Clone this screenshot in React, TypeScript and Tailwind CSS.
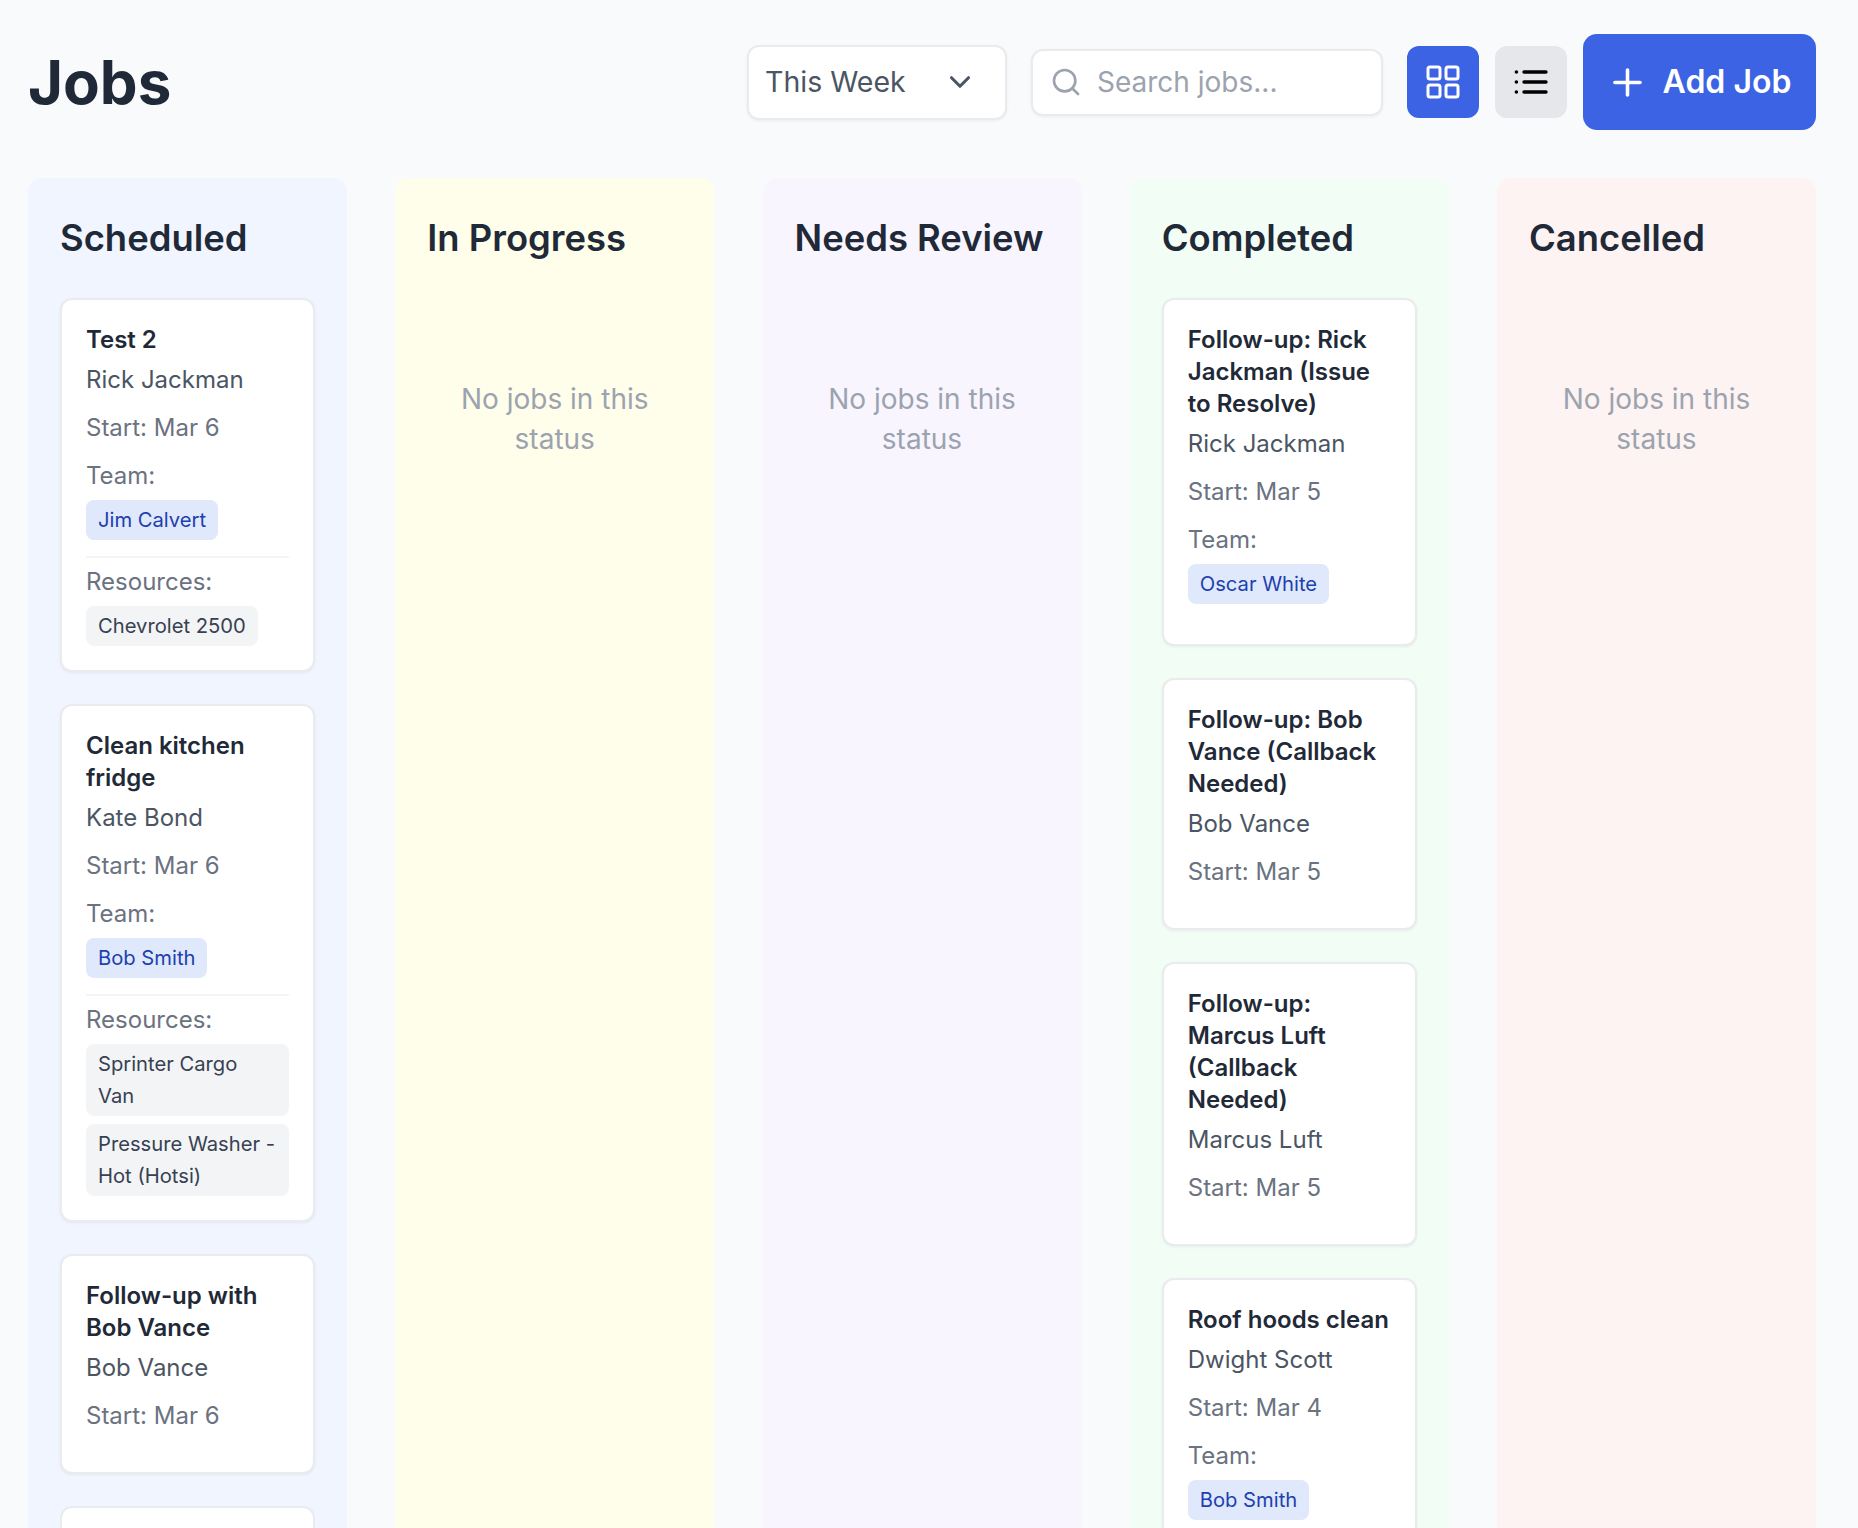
import { ChevronDown, Plus, Search } from "lucide-react";

interface Job {
  title: string;
  client: string;
  start: string;
  team?: string;
  resources?: string[];
}

const SCHEDULED: Job[] = [
  { title: "Test 2", client: "Rick Jackman", start: "Mar 6", team: "Jim Calvert", resources: ["Chevrolet 2500"] },
  {
    title: "Clean kitchen fridge",
    client: "Kate Bond",
    start: "Mar 6",
    team: "Bob Smith",
    resources: ["Sprinter Cargo Van", "Pressure Washer - Hot (Hotsi)"],
  },
  { title: "Follow-up with Bob Vance", client: "Bob Vance", start: "Mar 6" },
];

const COMPLETED: Job[] = [
  { title: "Follow-up: Rick Jackman (Issue to Resolve)", client: "Rick Jackman", start: "Mar 5", team: "Oscar White" },
  { title: "Follow-up: Bob Vance (Callback Needed)", client: "Bob Vance", start: "Mar 5" },
  { title: "Follow-up: Marcus Luft (Callback Needed)", client: "Marcus Luft", start: "Mar 5" },
  { title: "Roof hoods clean", client: "Dwight Scott", start: "Mar 4", team: "Bob Smith" },
];

function GridIcon() {
  return (
    <svg width="36" height="36" viewBox="0 0 36 36" fill="none" stroke="currentColor" strokeWidth="3">
      <rect x="3" y="3" width="12" height="12" rx="2" />
      <rect x="21" y="3" width="12" height="12" rx="2" />
      <rect x="3" y="21" width="12" height="12" rx="2" />
      <rect x="21" y="21" width="12" height="12" rx="2" />
    </svg>
  );
}

function ListIcon() {
  return (
    <svg width="36" height="36" viewBox="0 0 36 36" fill="none" stroke="currentColor" strokeWidth="3.4" strokeLinecap="round">
      <path d="M11 8h22M11 18h22M11 28h22" />
      <circle cx="3.4" cy="8" r="1.8" fill="currentColor" stroke="none" />
      <circle cx="3.4" cy="18" r="1.8" fill="currentColor" stroke="none" />
      <circle cx="3.4" cy="28" r="1.8" fill="currentColor" stroke="none" />
    </svg>
  );
}

function JobCard({ job }: { job: Job }) {
  return (
    <div className="rounded-[12px] border-2 border-[#eaebee] bg-white px-[24px] pt-[24px] pb-[23px] shadow-[0_1px_3px_rgba(0,0,0,0.06)]">
      <div className="text-[24px] leading-[32px] font-semibold text-[#1f2937]">{job.title}</div>
      <div className="mt-[8px] text-[24px] leading-[32px] text-[#4b5563]">{job.client}</div>
      <div className="mt-[16px] text-[24px] leading-[32px] text-[#6b7280]">Start: {job.start}</div>
      {job.team ? (
        <div className="mt-[16px]">
          <div className="text-[24px] leading-[32px] text-[#6b7280]">Team:</div>
          <div className={`mt-[8px] flex ${job.resources ? "mb-[16px]" : "mb-[17px]"}`}>
            <span className="rounded-[8px] bg-[#dfe9fb] px-[12px] py-[4px] text-[20.2px] leading-[32px] text-[#1e40af]">
              {job.team}
            </span>
          </div>
        </div>
      ) : (
        <div className="h-[17px]" />
      )}
      {job.resources && (
        <div className="border-t-2 border-[#f3f4f6] pt-[8px] pb-[1px]">
          <div className="text-[24px] leading-[32px] text-[#6b7280]">Resources:</div>
          <div className="mt-[8px] flex flex-col items-start gap-[8px]">
            {job.resources.map((r) => (
              <span key={r} className="rounded-[8px] bg-[#f3f4f6] px-[12px] py-[4px] text-[20.2px] leading-[32px] text-[#374151]">
                {r}
              </span>
            ))}
          </div>
        </div>
      )}
    </div>
  );
}

function Column({ title, bg, jobs, trailing }: { title: string; bg: string; jobs?: Job[]; trailing?: boolean }) {
  return (
    <div className={`flex w-[319px] shrink-0 flex-col overflow-hidden rounded-t-[14px] px-[32px] pt-[33px] ${bg}`}>
      <h2 className="mb-[33px] text-[36.4px] leading-[54px] font-semibold whitespace-nowrap text-[#1f2937]">{title}</h2>
      {jobs ? (
        <div className="flex flex-col gap-[32px]">
          {jobs.map((job) => (
            <JobCard key={job.title} job={job} />
          ))}
          {trailing && <div className="h-[100px] rounded-[12px] border-2 border-[#eaebee] bg-white" />}
        </div>
      ) : (
        <p className="px-[12px] pt-[81px] text-center text-[28px] leading-[40px] text-[#9ca3af]">No jobs in this status</p>
      )}
    </div>
  );
}

export default function App() {
  return (
    <div className="flex h-[1528px] flex-col overflow-hidden bg-[#f9fafb] pt-[34px] pr-[42px] pl-[28px] font-['Inter',sans-serif]">
      <div className="mb-[48px] flex h-[96px] items-center">
        <h1 className="text-[60px] leading-none font-bold text-[#1f2937]">Jobs</h1>
        <div className="ml-auto flex h-[75px] w-[260px] items-center justify-between rounded-[12px] border-2 border-[#eaebee] bg-white pr-[28px] pl-[16px] text-[28.5px] text-[#4b5563] shadow-[0_1px_3px_rgba(0,0,0,0.06)]">
          This Week
          <ChevronDown className="h-[34px] w-[34px]" strokeWidth={2.2} />
        </div>
        <div className="ml-[24px] flex h-[67px] w-[352px] items-center rounded-[12px] border-2 border-[#eaebee] bg-white pl-[17px] text-[28px] text-[#9ca3af] shadow-[0_1px_3px_rgba(0,0,0,0.06)]">
          <Search className="mr-[15px] h-[32px] w-[32px]" strokeWidth={2} />
          Search jobs...
        </div>
        <button className="ml-[24px] flex h-[72px] w-[72px] items-center justify-center rounded-[12px] bg-[#3b63e3] text-white">
          <GridIcon />
        </button>
        <button className="ml-[16px] flex h-[72px] w-[72px] items-center justify-center rounded-[12px] bg-[#e5e7eb] text-[#000000]">
          <ListIcon />
        </button>
        <button className="ml-[16px] flex h-[96px] w-[233px] items-center justify-center gap-[14px] rounded-[14px] bg-[#3b63e3] pr-[2px] text-[32px] font-semibold text-white">
          <Plus className="h-[43px] w-[43px]" strokeWidth={2} />
          Add Job
        </button>
      </div>
      <div className="flex flex-1 gap-[48.25px] overflow-hidden">
        <Column title="Scheduled" bg="bg-[#f0f5ff]" jobs={SCHEDULED} trailing />
        <Column title="In Progress" bg="bg-[#fefeea]" />
        <Column title="Needs Review" bg="bg-[#f8f5ff]" />
        <Column title="Completed" bg="bg-[#f2fdf5]" jobs={COMPLETED} />
        <Column title="Cancelled" bg="bg-[#fdf3f2]" />
      </div>
    </div>
  );
}
